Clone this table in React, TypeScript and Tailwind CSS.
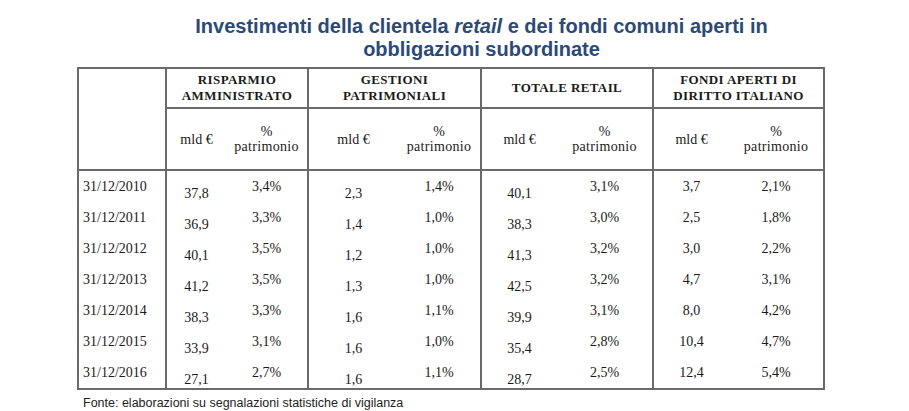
import React from 'react';

// Rows: date, risparmio (mld, %), gestioni (mld, %), totale (mld, %), fondi (mld, %)
const ROWS = [
  ['31/12/2010', '37,8', '3,4%', '2,3', '1,4%', '40,1', '3,1%', '3,7', '2,1%'],
  ['31/12/2011', '36,9', '3,3%', '1,4', '1,0%', '38,3', '3,0%', '2,5', '1,8%'],
  ['31/12/2012', '40,1', '3,5%', '1,2', '1,0%', '41,3', '3,2%', '3,0', '2,2%'],
  ['31/12/2013', '41,2', '3,5%', '1,3', '1,0%', '42,5', '3,2%', '4,7', '3,1%'],
  ['31/12/2014', '38,3', '3,3%', '1,6', '1,1%', '39,9', '3,1%', '8,0', '4,2%'],
  ['31/12/2015', '33,9', '3,1%', '1,6', '1,0%', '35,4', '2,8%', '10,4', '4,7%'],
  ['31/12/2016', '27,1', '2,7%', '1,6', '1,1%', '28,7', '2,5%', '12,4', '5,4%'],
];

const GROUPS = [
  ['RISPARMIO', 'AMMINISTRATO'],
  ['GESTIONI', 'PATRIMONIALI'],
  ['TOTALE RETAIL'],
  ['FONDI APERTI DI', 'DIRITTO ITALIANO'],
];

const line = 'border-2 border-[#6a6a6a]';

export default function App() {
  return (
    <div className="w-[909px] h-[411px] bg-white overflow-hidden">
      {/* Title */}
      <div className="pt-[15px] pl-[54px] text-center font-['Liberation_Sans',Arial,sans-serif] font-bold text-[20px] leading-[23px] text-[#2b4a78]">
        <div>
          Investimenti della clientela <i>retail</i> e dei fondi comuni aperti in
        </div>
        <div>obbligazioni subordinate</div>
      </div>

      <table className="ml-[77px] mt-[6px] w-[746px] table-fixed border-collapse font-['Liberation_Serif','Times_New_Roman',serif] text-[#1a1a1a]">
        <colgroup>
          <col className="w-[88px]" />
          <col className="w-[60px]" />
          <col className="w-[82px]" />
          <col className="w-[90px]" />
          <col className="w-[83px]" />
          <col className="w-[76px]" />
          <col className="w-[96px]" />
          <col className="w-[76px]" />
          <col className="w-[95px]" />
        </colgroup>
        <thead>
          <tr className="h-[40px]">
            <th rowSpan={2} className={line}></th>
            {GROUPS.map((g, i) => (
              <th
                key={i}
                colSpan={2}
                className={`${line} text-[13px] leading-[16px] font-bold tracking-[0.4px] text-center align-middle`}
              >
                {g.map((l) => (
                  <div key={l}>{l}</div>
                ))}
              </th>
            ))}
          </tr>
          <tr className="h-[62px]">
            {GROUPS.map((_, i) => (
              <React.Fragment key={i}>
                <th className="border-y-2 border-l-2 border-[#6a6a6a] font-normal text-[14px] leading-[15px] text-center align-middle">
                  mld €
                </th>
                <th className="border-y-2 border-r-2 border-[#6a6a6a] font-normal text-[14px] leading-[15px] text-center align-middle">
                  <div>%</div>
                  <div className="tracking-[0.3px]">patrimonio</div>
                </th>
              </React.Fragment>
            ))}
          </tr>
        </thead>
        <tbody className="text-[14px] leading-[16px]">
          {ROWS.map((r, ri) => {
            const last = ri === ROWS.length - 1;
            const bottom = last ? 'border-b-2 border-b-[#6a6a6a]' : '';
            return (
              <tr key={r[0]} className="h-[30.7px]">
                <td className={`border-x-2 border-[#6a6a6a] ${bottom} align-top pt-[8px] pl-[4px] text-left`}>
                  {r[0]}
                </td>
                {[0, 1, 2, 3].map((g) => (
                  <React.Fragment key={g}>
                    <td
                      className={`border-l-2 border-[#6a6a6a] ${bottom} align-top text-center ${
                        g === 3 ? 'pt-[8px]' : 'pt-[15px]'
                      }`}
                    >
                      {r[1 + g * 2]}
                    </td>
                    <td className={`border-r-2 border-[#6a6a6a] ${bottom} align-top text-center pt-[8px]`}>
                      {r[2 + g * 2]}
                    </td>
                  </React.Fragment>
                ))}
              </tr>
            );
          })}
        </tbody>
      </table>

      <div className="ml-[83px] mt-[6px] font-['Liberation_Sans',Arial,sans-serif] text-[12.5px] leading-[14px] text-[#222]">
        Fonte: elaborazioni su segnalazioni statistiche di vigilanza
      </div>
    </div>
  );
}
